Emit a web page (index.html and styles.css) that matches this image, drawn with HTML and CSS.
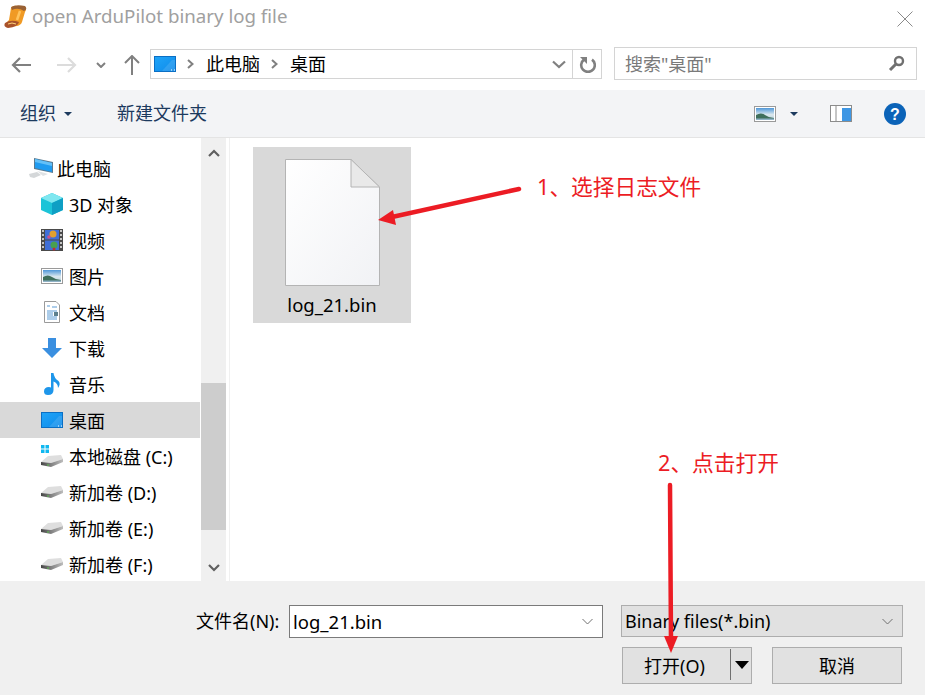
FILE: index.html
```html
<!DOCTYPE html>
<html lang="en">
<head>
	<meta charset="UTF-8">
	<title>open ArduPilot binary log file</title>
	<link rel="stylesheet" href="styles.css">
</head>
<body>
	<svg class="defs" width="0" height="0">
		<defs>
			<linearGradient id="screen" x1="0" y1="0" x2="1" y2="1">
				<stop offset="0" stop-color="#1fa4f8"/>
				<stop offset="1" stop-color="#0f8bea"/>
			</linearGradient>
			<linearGradient id="sky" x1="0" y1="0" x2="0" y2="1">
				<stop offset="0" stop-color="#4f97d8"/>
				<stop offset="0.55" stop-color="#dbe8ee"/>
				<stop offset="1" stop-color="#b8d0dc"/>
			</linearGradient>
			<linearGradient id="paper" x1="0" y1="0" x2="1" y2="1">
				<stop offset="0" stop-color="#ffffff"/>
				<stop offset="1" stop-color="#f1f2f5"/>
			</linearGradient>
			<linearGradient id="hdd" x1="0" y1="0" x2="1" y2="0">
				<stop offset="0" stop-color="#444"/>
				<stop offset="0.45" stop-color="#808080"/>
				<stop offset="1" stop-color="#bdbdbd"/>
			</linearGradient>
			<symbol id="desk" viewBox="0 0 22 16">
				<rect x="0" y="0" width="22" height="16" fill="#0b6fc4"/>
				<rect x="1" y="1" width="20" height="14" fill="url(#screen)"/>
				<path d="M8 15 L18 4 L21 4 L21 15 Z" fill="#fff" opacity=".12"/>
				<path d="M17 14h1M20 14h1" stroke="#fff"/>
			</symbol>
			<symbol id="pic" viewBox="0 0 22 16">
				<rect x=".5" y=".5" width="21" height="15" fill="#fff" stroke="#9a9a9a"/>
				<rect x="2" y="2" width="18" height="12" fill="url(#sky)"/>
				<path d="M2 9 Q7 6 11 9 T20 12 V14 H2 Z" fill="#3f6f5c"/>
				<path d="M2 12.5 H20 V14 H2 Z" fill="#8fb2c6"/>
			</symbol>
			<symbol id="drive" viewBox="0 0 22 12">
				<path d="M0 7 L7 1 L20 0 L22 4 L10 8 Z" fill="#dedede"/>
				<path d="M0 7 L10 8 L22 4 V7 L10 12 L0 10 Z" fill="url(#hdd)"/>
				<path d="M6 10h2" stroke="#58c04a"/>
			</symbol>
		</defs>
	</svg>

	<div class="dialog">
		<div class="titlebar">
			<svg class="title-icon" width="23" height="23" viewBox="0 0 23 23">
				<path d="M7 3 Q9 0 13 1 L21 2 Q23 4 21 7 L18 17 Q17 20 13 21 L3 22 Q0 20 2 18 L5 15 Z" fill="#f09a24"/>
				<path d="M7 2 Q12 -1 21 1 Q24 4 20 6 Q14 2 8 5 Z" fill="#9a6235"/>
				<path d="M1 18 Q7 14 15 17 Q14 22 4 23 Q-1 22 1 18 Z" fill="#a9522a"/>
				<path d="M4 19 Q8 17 12 19" stroke="#ffd27a" fill="none"/>
				<path d="M16 6 L13 15" stroke="#ffc35c" stroke-width="2.500"/>
			</svg>
			<span class="title-text">open ArduPilot binary log file</span>
			<svg class="close-x" width="16" height="16" viewBox="0 0 16 16">
				<path d="M.5.5 L15.5 15.5 M15.5.5 L.5 15.5" stroke="#8a8a8a" fill="none"/>
			</svg>
		</div>

		<div class="navbar">
			<div class="nav-btns">
				<svg width="20" height="16" viewBox="0 0 20 16"><path d="M9 1 L2 8 L9 15 M2 8 H20" stroke="#808080" stroke-width="2.2" fill="none"/></svg>
				<svg class="nav-forward" width="20" height="16" viewBox="0 0 20 16"><path d="M11 1 L18 8 L11 15 M18 8 H0" stroke="#dcdcdc" stroke-width="2.2" fill="none"/></svg>
				<svg class="nav-down" width="10" height="6" viewBox="0 0 10 6"><path d="M1 1 L5 5 L9 1" stroke="#808080" stroke-width="2" fill="none"/></svg>
				<svg class="nav-up" width="16" height="20" viewBox="0 0 16 20"><path d="M1 8 L8 1 L15 8 M8 1 V20" stroke="#808080" stroke-width="2" fill="none"/></svg>
			</div>
			<div class="address">
				<svg class="addr-icon" width="22" height="16"><use href="#desk"/></svg>
				<svg class="crumb-sep" width="7" height="10" viewBox="0 0 7 10"><path d="M1 1 L5.5 5 L1 9" stroke="#808080" stroke-width="2" fill="none"/></svg>
				<span class="crumb">此电脑</span>
				<svg class="crumb-sep" width="7" height="10" viewBox="0 0 7 10"><path d="M1 1 L5.5 5 L1 9" stroke="#808080" stroke-width="2" fill="none"/></svg>
				<span class="crumb">桌面</span>
				<svg class="addr-drop" width="14" height="9" viewBox="0 0 14 9"><path d="M1 1.5 L7 7 L13 1.5" stroke="#808080" stroke-width="2.2" fill="none"/></svg>
				<div class="addr-refresh">
					<svg width="17" height="17" viewBox="0 0 17 17"><path d="M5 3.6 A6.8 6.8 0 1 0 13 3.6" stroke="#808080" stroke-width="2.6" fill="none"/><path d="M1 1 H8 V8 Z" fill="#808080"/></svg>
				</div>
			</div>
			<div class="search">
				<span class="search-text">搜索"桌面"</span>
				<svg width="17" height="17" viewBox="0 0 17 17"><circle cx="11" cy="6" r="4" stroke="#707070" stroke-width="2.4" fill="none"/><path d="M8 9 L2 15" stroke="#707070" stroke-width="3"/></svg>
			</div>
		</div>

		<div class="cmdbar">
			<span class="cmd-item">组织</span>
			<i class="cmd-caret"></i>
			<span class="cmd-item cmd-new">新建文件夹</span>
			<div class="cmd-right">
				<svg width="22" height="16"><use href="#pic"/></svg>
				<i class="cmd-caret view-caret"></i>
				<svg class="pane-icon" width="22" height="17" viewBox="0 0 22 17">
					<rect x=".5" y=".5" width="21" height="16" fill="#fff" stroke="#8c8c8c"/>
					<path d="M6 1v15" stroke="#8c8c8c"/>
					<rect x="12" y="3" width="9" height="13" fill="#3f97e4"/>
				</svg>
				<svg class="help-icon" width="22" height="22" viewBox="0 0 22 22">
					<circle cx="11" cy="11" r="11" fill="#0b63b8"/>
					<text x="11" y="17" text-anchor="middle" class="help-q">?</text>
				</svg>
			</div>
		</div>

		<div class="main">
			<div class="sidebar">
				<ul class="tree">
					<li class="tree-root">
						<svg width="24" height="20" viewBox="0 0 24 20">
							<path d="M5 0 L24 4 V15 L5 11 Z" fill="#5a7a90"/>
							<path d="M6 1 L23 5 V14 L6 10 Z" fill="#1f9bf0"/>
							<path d="M6 1 L23 5 V8 L6 4 Z" fill="#63c0f8"/>
							<path d="M0 16 L8 14 L12 17 L5 20 L1 19 Z" fill="#d4d7d9"/>
							<path d="M8 13 L14 14.500 L19 16 L14 18 Z" fill="#dfe2e4"/>
						</svg>
						此电脑
					</li>
					<li>
						<svg width="22" height="22" viewBox="0 0 22 22">
							<path d="M11 0 L22 5 V17 L11 22 L0 17 V5 Z" fill="#1cc4d8"/>
							<path d="M11 0 L22 5 L11 10 L0 5 Z" fill="#7fe7f0"/>
							<path d="M11 10 L22 5 V17 L11 22 Z" fill="#0f9fc4"/>
						</svg>
						3D 对象
					</li>
					<li>
						<svg width="22" height="22" viewBox="0 0 22 22">
							<rect width="22" height="22" fill="#4a4a4a"/>
							<rect x="4" y="1" width="14" height="9.5" fill="#3f6fd8"/>
							<rect x="4" y="11.5" width="14" height="9.5" fill="#3f6fd8"/>
							<circle cx="12" cy="5" r="3.5" fill="#e0a030"/><circle cx="8" cy="8" r="1.8" fill="#d0508a"/>
							<circle cx="13" cy="16" r="3.5" fill="#48a050"/><circle cx="13" cy="20" r="1.5" fill="#c03030"/>
							<path d="M2 1v20M20 1v20" stroke="#e4e4e4" stroke-width="1.6" stroke-dasharray="2 2"/>
						</svg>
						视频
					</li>
					<li><svg width="22" height="16"><use href="#pic"/></svg>图片</li>
					<li>
						<svg width="22" height="22" viewBox="0 0 22 22">
							<path d="M3.5.5 H15 L18.5 4 V21.5 H3.5 Z" fill="#fff" stroke="#9a9a9a"/>
							<path d="M6 5h3M11 6h5M6 10h10M6 12h6M6 14h6M6 16h10M6 18h10" stroke="#5b9bd5"/>
							<rect x="13" y="11" width="4" height="4" fill="#5d7f8c"/>
						</svg>
						文档
					</li>
					<li>
						<svg width="22" height="22" viewBox="0 0 22 22"><path d="M7 1 H15 V11 H21 L11 21 L1 11 H7 Z" fill="#3a8fe0"/></svg>
						下载
					</li>
					<li>
						<svg width="22" height="22" viewBox="0 0 22 22"><path d="M10 0 H12.500 Q13 5 17.500 8 Q20 11 17 15 Q17 10 12.500 8.500 V17 Q12.500 22 7 22 Q3 22 3 18.500 Q3 14 8 14 Q9 14 10 14.500 Z" fill="#1e96ea"/></svg>
						音乐
					</li>
					<li class="tree-on"><svg width="22" height="16"><use href="#desk"/></svg>桌面</li>
					<li>
						<svg class="drive-c" width="22" height="22" viewBox="0 0 22 22">
							<path d="M0 0h3.500v3.500H0z M4.500 0h3.500v3.500h-3.500z M0 4.500h3.500v3.500H0z M4.500 4.500h3.500v3.500h-3.500z" fill="#11b8f0"/>
							<use href="#drive" y="10" width="22" height="12"/>
						</svg>
						本地磁盘 (C:)
					</li>
					<li><svg class="drive" width="22" height="12"><use href="#drive"/></svg>新加卷 (D:)</li>
					<li><svg class="drive" width="22" height="12"><use href="#drive"/></svg>新加卷 (E:)</li>
					<li><svg class="drive" width="22" height="12"><use href="#drive"/></svg>新加卷 (F:)</li>
				</ul>
			</div>
			<div class="scrollbar">
				<svg class="sb-arrow sb-up" width="12" height="8" viewBox="0 0 12 8"><path d="M1 7 L6 2 L11 7" stroke="#606060" stroke-width="2.2" fill="none"/></svg>
				<div class="sb-track"><div class="sb-thumb"></div></div>
				<svg class="sb-arrow sb-down" width="12" height="8" viewBox="0 0 12 8"><path d="M1 1 L6 6 L11 1" stroke="#606060" stroke-width="2.2" fill="none"/></svg>
			</div>
			<div class="files">
				<div class="file-item">
					<svg width="95" height="127" viewBox="0 0 95 127">
						<path d="M.5.5 H66 L94.500 28 V126.500 H.5 Z" fill="url(#paper)" stroke="#b4b4b4"/>
						<path d="M66 .5 V28 H94.500 Z" fill="#e9e9e9" stroke="#b4b4b4"/>
					</svg>
					<span class="file-name">log_21.bin</span>
				</div>
			</div>
		</div>

		<div class="footer">
			<div class="foot-row">
				<label class="foot-label">文件名(N):</label>
				<div class="name-input">
					<span>log_21.bin</span>
					<svg width="11" height="7" viewBox="0 0 11 7"><path d="M.5 1 L5.500 6 L10.500 1" stroke="#707070" fill="none"/></svg>
				</div>
				<div class="type-select">
					<span>Binary files(*.bin)</span>
					<svg width="11" height="7" viewBox="0 0 11 7"><path d="M.5 1 L5.500 6 L10.500 1" stroke="#707070" fill="none"/></svg>
				</div>
			</div>
			<div class="foot-btns">
				<div class="btn btn-open">
					<span class="btn-open-text">打开(O)</span>
					<i class="btn-split"></i>
					<i class="btn-caret"></i>
				</div>
				<div class="btn btn-cancel">取消</div>
			</div>
		</div>

		<!-- 标注 -->
		<svg class="marks" width="925" height="695" viewBox="0 0 925 695">
			<path d="M519 189 L392 217" stroke="#ec1c24" stroke-width="4.500" stroke-linecap="round"/>
			<path d="M378 220 L393 210 L396 225 Z" fill="#ec1c24"/>
			<path d="M670 485 L671 642" stroke="#ec1c24" stroke-width="4.500" stroke-linecap="round"/>
			<path d="M671 653 L664 636 H678 Z" fill="#ec1c24"/>
		</svg>
		<span class="note note-1">1、选择日志文件</span>
		<span class="note note-2">2、点击打开</span>
	</div>
</body>
</html>
```

FILE: styles.css
```css
*{
	margin: 0;
	padding: 0;
	box-sizing: border-box;
}
body{
	background: #fff;
	font-family: "Noto Sans", "Noto Sans CJK SC", sans-serif;
	font-size: 18px;
	color: #000;
	overflow: hidden;
}
svg{
	display: block;
	flex: none;
}
.defs{
	position: absolute;
}
.dialog{
	width: 925px;
	height: 695px;
	position: relative;
	display: flex;
	flex-direction: column;
}

/* title */
.titlebar{
	height: 40px;
	display: flex;
	align-items: center;
	padding: 0 12px 8px 4px;
}
.title-icon{
	margin-right: 5px;
}
.title-text{
	font-size: 18.7px;
	color: #a0a0a0;
	padding-bottom: 2px;
}
.close-x{
	margin-left: auto;
	margin-top: 6px;
}

/* nav */
.navbar{
	height: 50px;
	display: flex;
	align-items: flex-start;
	padding-left: 11px;
}
.nav-btns{
	width: 139px;
	height: 50px;
	display: flex;
	align-items: center;
}
.nav-forward{
	margin-left: 26px;
}
.nav-down{
	margin-left: 19px;
}
.nav-up{
	margin-left: 18px;
}
.address{
	width: 452px;
	height: 30px;
	margin-top: 9px;
	border: 1px solid #d4d4d4;
	display: flex;
	align-items: center;
	padding-left: 3px;
}
.crumb-sep{
	margin: 0 12px 0 11px;
}
.crumb{
	padding-bottom: 2px;
}
.addr-drop{
	margin-left: auto;
	margin-right: 6px;
}
.addr-refresh{
	width: 29px;
	height: 100%;
	border-left: 1px solid #d4d4d4;
	display: flex;
	align-items: center;
	justify-content: center;
}
.search{
	width: 303px;
	height: 33px;
	margin: 7px 0 0 12px;
	border: 1px solid #d4d4d4;
	display: flex;
	align-items: center;
	justify-content: space-between;
	padding: 0 11px 0 10px;
	color: #7a7a7a;
}
.search-text{
	padding-bottom: 2px;
}

/* command bar */
.cmdbar{
	height: 48px;
	background: #f3f4f6;
	border-bottom: 1px solid #e4e4e4;
	display: flex;
	align-items: center;
	padding: 0 19px 0 21px;
	color: #1c3a5e;
}
.cmd-item{
	padding-bottom: 3px;
	margin-left: -1px;
}
.cmd-caret{
	width: 0;
	height: 0;
	border: 4px solid transparent;
	border-top: 4px solid #1c3a5e;
	border-bottom: 0;
	margin-left: 8px;
}
.cmd-new{
	margin-left: 45px;
}
.cmd-right{
	margin-left: auto;
	display: flex;
	align-items: center;
}
.view-caret{
	margin-left: 14px;
}
.pane-icon{
	margin-left: 32px;
}
.help-icon{
	margin-left: 32px;
}
.help-q{
	font: bold 16px "Liberation Sans", sans-serif;
	fill: #fff;
}

/* main */
.main{
	flex: 1;
	min-height: 0;
	display: flex;
}
.sidebar{
	width: 201px;
	padding-top: 12px;
	overflow: hidden;
}
.tree{
	list-style: none;
}
.tree li{
	width: 200px;
	height: 36px;
	display: flex;
	align-items: center;
	gap: 6px;
	padding-left: 41px;
	white-space: nowrap;
}
.tree li.tree-root{
	padding-left: 29px;
	gap: 4px;
}
.tree li.tree-on{
	background: #d9d9d9;
}
.scrollbar{
	width: 25px;
	background: #f0f0f0;
	display: flex;
	flex-direction: column;
	align-items: center;
}
.sb-up{
	margin-top: 11px;
}
.sb-down{
	margin-bottom: 9px;
}
.sb-track{
	flex: 1;
	width: 100%;
}
.sb-thumb{
	height: 147px;
	margin-top: 226px;
	background: #cdcdcd;
}
.files{
	flex: 1;
	margin-left: 3px;
	border-left: 1px solid #f0f0f0;
	padding: 9px 0 0 23px;
}
.file-item{
	width: 158px;
	height: 176px;
	background: #d9d9d9;
	display: flex;
	flex-direction: column;
	align-items: center;
	padding-top: 12px;
}
.file-name{
	font-size: 18.5px;
	margin-top: 6px;
}

/* footer */
.footer{
	height: 114px;
	background: #f0f0f0;
	padding-top: 24px;
}
.foot-row{
	display: flex;
	align-items: flex-start;
	padding-left: 196px;
}
.foot-label{
	width: 93px;
	line-height: 32px;
}
.name-input{
	width: 314px;
	height: 33px;
	background: #fff;
	border: 1px solid #7a7a7a;
	display: flex;
	align-items: center;
	justify-content: space-between;
	padding: 0 9px 0 3px;
	font-size: 18.5px;
}
.type-select{
	width: 282px;
	height: 32px;
	margin-left: 18px;
	background: #e1e1e1;
	border: 1px solid #adadad;
	display: flex;
	align-items: center;
	justify-content: space-between;
	padding: 0 9px 0 3px;
}
.foot-btns{
	display: flex;
	gap: 20px;
	margin-top: 9px;
	padding-left: 622px;
}
.btn{
	height: 37px;
	background: #e1e1e1;
	border: 1px solid #adadad;
	display: flex;
	align-items: center;
	padding-bottom: 2px;
}
.btn-open{
	width: 130px;
}
.btn-open-text{
	margin-left: 21px;
	width: 86px;
	white-space: nowrap;
}
.btn-split{
	width: 1px;
	height: 31px;
	background: #707070;
}
.btn-caret{
	width: 0;
	height: 0;
	border-style: solid;
	border-color: #000 transparent transparent;
	border-width: 8px 7px 0;
	margin-left: 4px;
}
.btn-cancel{
	width: 130px;
	justify-content: center;
}

/* annotations, drawn over the screenshot */
.marks{
	position: absolute;
	left: 0;
	top: 0;
	pointer-events: none;
}
.note{
	position: absolute;
	font-size: 21.7px;
	color: #ec1c24;
	white-space: nowrap;
}
.note-1{
	left: 537px;
	top: 170px;
}
.note-2{
	left: 658px;
	top: 446px;
}
```
